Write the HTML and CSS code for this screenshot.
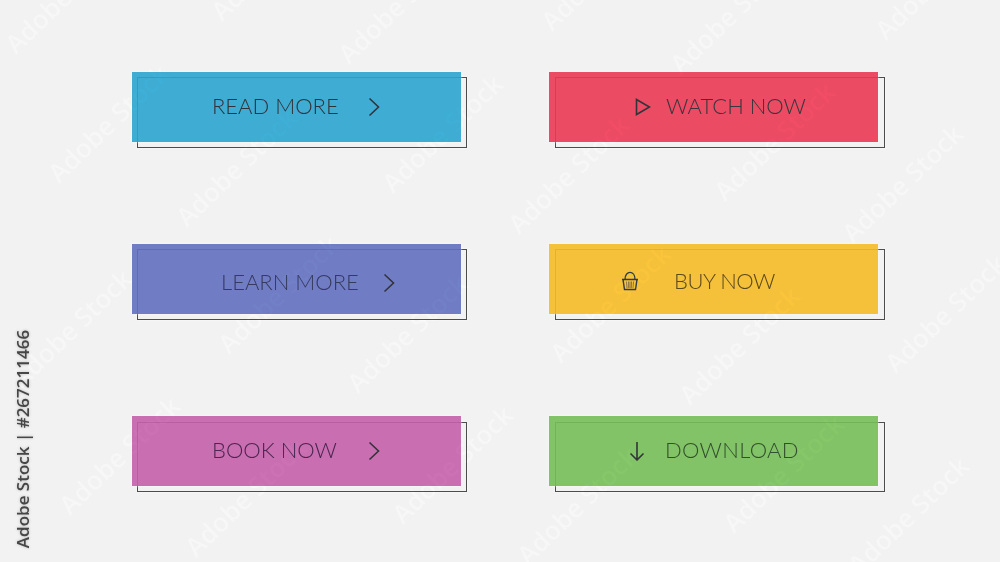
FILE: index.html
```html
<!DOCTYPE html>
<html lang="en">
<head>
<meta charset="utf-8">
<title>Web buttons</title>
<link rel="stylesheet" href="styles.css">
</head>
<body>
<main class="grid">
  <a class="btn blue"><span class="inner"><span class="label">READ MORE</span><svg class="icon chevron" viewBox="0 0 12 20"><path d="M1.500 1.500L10.500 10 1.500 18.500"/></svg></span></a>
  <a class="btn red"><span class="inner"><svg class="icon play" viewBox="0 0 16 18"><path d="M1.500 1.500L14.500 9 1.500 16.500z"/></svg><span class="label">WATCH NOW</span></span></a>
  <a class="btn indigo"><span class="inner"><span class="label">LEARN MORE</span><svg class="icon chevron" viewBox="0 0 12 20"><path d="M1.500 1.500L10.500 10 1.500 18.500"/></svg></span></a>
  <a class="btn yellow"><span class="inner"><svg class="icon basket" viewBox="0 0 18 20"><path d="M1 8.500h16M2 8.500l1.500 10h11l1.500-10M4 8.500c0-9.500 10-9.500 10 0"/><path class="stripes" d="M5.500 10.500l.5 6.500M7.500 10.500l.2 6.500M9 10.500v6.500M10.500 10.500l-.2 6.500M12.500 10.500l-.5 6.500"/></svg><span class="label">BUY NOW</span></span></a>
  <a class="btn pink"><span class="inner"><span class="label">BOOK NOW</span><svg class="icon chevron" viewBox="0 0 12 20"><path d="M1.500 1.500L10.500 10 1.500 18.500"/></svg></span></a>
  <a class="btn green"><span class="inner"><svg class="icon arrow" viewBox="0 0 16 20"><path d="M8 1v18M1.500 12.500L8 19l6.500-6.500"/></svg><span class="label">DOWNLOAD</span></span></a>
</main>
<div class="credit">Adobe Stock | #267211466</div>
<div class="marks" aria-hidden="true">
  <span class="wm a1">Adobe Stock</span><span class="wm a2">Adobe Stock</span><span class="wm a3">Adobe Stock</span><span class="wm a4">Adobe Stock</span><span class="wm a5">Adobe Stock</span><span class="wm a6">Adobe Stock</span>
  <span class="wm b1">Adobe Stock</span><span class="wm b2">Adobe Stock</span><span class="wm b3">Adobe Stock</span><span class="wm b4">Adobe Stock</span><span class="wm b5">Adobe Stock</span><span class="wm b6">Adobe Stock</span>
  <span class="wm c1">Adobe Stock</span><span class="wm c2">Adobe Stock</span><span class="wm c3">Adobe Stock</span><span class="wm c4">Adobe Stock</span><span class="wm c5">Adobe Stock</span><span class="wm c6">Adobe Stock</span>
  <span class="wm d1">Adobe Stock</span><span class="wm d2">Adobe Stock</span><span class="wm d3">Adobe Stock</span><span class="wm d4">Adobe Stock</span><span class="wm d5">Adobe Stock</span><span class="wm d6">Adobe Stock</span>
</div>
</body>
</html>
```
FILE: styles.css
```css
*, *::before, *::after { box-sizing: border-box; }
html, body { margin: 0; height: 100%; }
body {
  position: relative;
  overflow: hidden;
  width: 1000px;
  height: 562px;
  background: #f2f2f2;
  font-family: Lato, "Liberation Sans", sans-serif;
}
.grid {
  display: grid;
  grid-template-columns: 329px 329px;
  grid-auto-rows: 70px;
  column-gap: 88px;
  row-gap: 102px;
  padding: 72px 0 0 132px;
}
.btn {
  position: relative;
  display: block;
  height: 70px;
}
.btn::before {
  content: "";
  position: absolute;
  left: 5px;
  top: 5px;
  width: 330px;
  height: 71px;
  border: 1px solid #4c4c4c;
  box-shadow: 0 0 2px rgba(255, 255, 255, .9);
}
.btn::after {
  content: "";
  position: absolute;
  left: 0;
  top: 0;
  right: 0;
  bottom: .5px;
  opacity: .9;
  box-shadow: 0 0 2px rgba(255, 255, 255, .8);
}
.red::before, .yellow::before, .green::before { left: 6px; }
.pink::before, .green::before { top: 6px; height: 70px; }
.blue { color: #2f3339; }
.red { color: #3a363c; }
.indigo { color: #363a60; }
.yellow { color: #5c491c; }
.pink { color: #4a2650; }
.green { color: #33502d; }
.blue::after { background: #2ba5d0; }
.red::after { background: #ec3a55; }
.indigo::after { background: #6271c0; }
.yellow::after { background: #f6bc27; }
.pink::after { background: #c561ab; }
.green::after { background: #76bf58; }
.inner {
  position: relative;
  z-index: 1;
  display: flex;
  align-items: center;
  height: 100%;
  font-weight: 300;
  font-size: 22px;
  white-space: nowrap;
}
.blue .inner, .pink .inner { padding-left: 80px; }
.indigo .inner { padding-left: 89px; }
.red .inner { padding-left: 86px; }
.yellow .inner { padding-left: 72px; }
.green .inner { padding-left: 80px; }
.blue .label, .red .label { margin-bottom: 4px; }
.indigo .label { margin-top: 4px; }
.yellow .label { margin-top: 2px; letter-spacing: -.5px; }
.pink .label { margin-bottom: 3px; }
.green .label { margin-bottom: 3px; letter-spacing: .3px; }
.icon {
  flex: none;
  fill: none;
  stroke: #33333a;
  stroke-width: 1.600;
}
.chevron { width: 12px; height: 20px; margin-left: 29px; }
.indigo .chevron { margin-left: 24px; margin-top: 8px; }
.pink .chevron { margin-left: 31px; }
.play { width: 16px; height: 18px; margin-right: 15px; }
.arrow { width: 16px; height: 20px; margin-right: 20px; }
.basket {
  width: 18px;
  height: 20px;
  margin-top: 3px;
  margin-right: 35px;
  stroke: #2f3a4a;
  stroke-width: 1.400;
}
.basket .stripes { stroke: #5a5040; stroke-width: .7; }
.credit {
  position: absolute;
  left: 22px;
  top: 438.500px;
  transform: translate(-50%, -50%) rotate(-90deg);
  font-family: "Open Sans", sans-serif;
  font-weight: 600;
  font-size: 17px;
  color: #464646;
  text-shadow: 0 0 3px rgba(0, 0, 0, .25);
  white-space: nowrap;
}
.marks {
  position: absolute;
  inset: 0;
  pointer-events: none;
  overflow: hidden;
  z-index: 2;
  mix-blend-mode: color-dodge;
}
.wm {
  position: absolute;
  transform: translate(-50%, -50%) rotate(-44deg);
  font-family: "Open Sans", sans-serif;
  font-weight: 600;
  font-size: 26px;
  color: #050505;
  white-space: nowrap;
}
.a1 { left: 65px; top: -6px; }
.a2 { left: 271px; top: -39px; }
.a3 { left: 398px; top: 4px; }
.a4 { left: 601px; top: -29px; }
.a5 { left: 730px; top: 14px; }
.a6 { left: 935px; top: -20px; }
.b1 { left: 108px; top: 123px; }
.b2 { left: 236px; top: 167px; }
.b3 { left: 442px; top: 133px; }
.b4 { left: 568px; top: 174px; }
.b5 { left: 774px; top: 141px; }
.b6 { left: 902px; top: 183px; }
.c1 { left: 71px; top: 328px; }
.c2 { left: 278px; top: 294px; }
.c3 { left: 407px; top: 333px; }
.c4 { left: 610px; top: 303px; }
.c5 { left: 739px; top: 345px; }
.c6 { left: 945px; top: 313px; }
.d1 { left: 119px; top: 455px; }
.d2 { left: 245px; top: 497px; }
.d3 { left: 452px; top: 464px; }
.d4 { left: 577px; top: 505px; }
.d5 { left: 783px; top: 473px; }
.d6 { left: 908px; top: 515px; }
```
